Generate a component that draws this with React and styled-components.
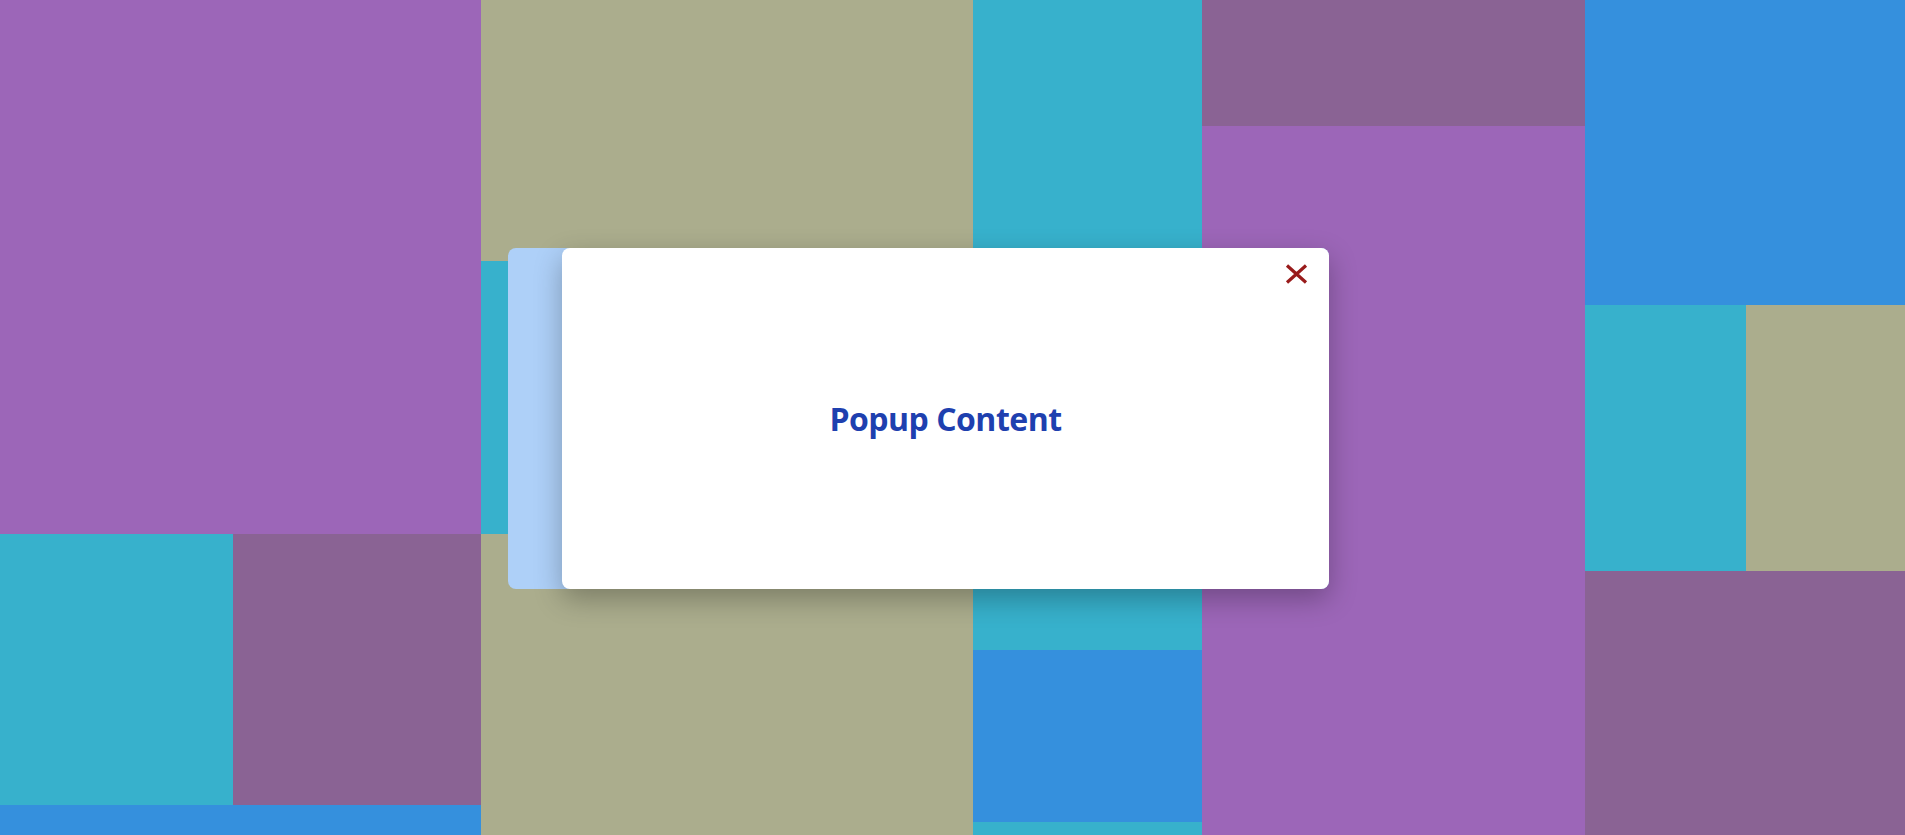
import React from "react";
import styled, { createGlobalStyle } from "styled-components";

const Global = createGlobalStyle`
  html, body { margin: 0; padding: 0; height: 100%; overflow: hidden; }
  body { font-family: "Open Sans", "Noto Sans", sans-serif; }
  #root { height: 100%; }
`;

const C = {
  purple: "#9c66b8",
  plum: "#8a6394",
  cyan: "#37b1cc",
  blue: "#3590dd",
  khaki: "#abad8d",
};

const Page = styled.div`
  position: relative;
  width: 1905px;
  height: 835px;
  overflow: hidden;
`;

const Mosaic = styled.div`
  display: flex;
  width: 100%;
  height: 100%;
`;

const Column = styled.div`
  display: flex;
  flex-direction: column;
  width: ${(p) => p.$w}px;
  flex-shrink: 0;
  height: 100%;
`;

const Row = styled.div`
  display: flex;
  height: ${(p) => p.$h}px;
  flex-shrink: 0;
`;

const Tile = styled.div`
  background: ${(p) => p.$c};
  flex: ${(p) => (p.$h || p.$w ? "none" : "1")};
  ${(p) => (p.$h ? `height: ${p.$h}px;` : "")}
  ${(p) => (p.$w ? `width: ${p.$w}px;` : "")}
`;

const Overlay = styled.div`
  position: absolute;
  left: 508px;
  top: 248px;
  width: 821px;
  height: 341px;
  display: flex;
`;

const BackCard = styled.div`
  position: absolute;
  inset: 0;
  background: #aed0f8;
  border-radius: 8px;
`;

const Card = styled.div`
  position: relative;
  margin-left: 54px;
  flex: 1;
  background: #ffffff;
  border-radius: 8px;
  box-shadow: 0 10px 28px rgba(0, 0, 0, 0.28);
  display: flex;
  align-items: center;
  justify-content: center;
`;

const Title = styled.h2`
  margin: 0;
  font-family: "Open Sans", "Noto Sans", sans-serif;
  font-weight: 700;
  font-size: 32px;
  letter-spacing: -0.5px;
  color: #1e40af;
`;

const Close = styled.button`
  position: absolute;
  top: 16px;
  right: 21px;
  width: 23px;
  height: 20px;
  padding: 0;
  border: 0;
  background: transparent;
  cursor: pointer;
  display: flex;
`;

export default function App() {
  return (
    <Page>
      <Global />
      <Mosaic>
        <Column $w={481}>
          <Tile $c={C.purple} $h={534} />
          <Row $h={271}>
            <Tile $c={C.cyan} $w={233} />
            <Tile $c={C.plum} />
          </Row>
          <Tile $c={C.blue} />
        </Column>
        <Column $w={492}>
          <Tile $c={C.khaki} $h={261} />
          <Tile $c={C.cyan} $h={273} />
          <Tile $c={C.khaki} />
        </Column>
        <Column $w={229}>
          <Tile $c={C.cyan} $h={650} />
          <Tile $c={C.blue} $h={172} />
          <Tile $c={C.cyan} />
        </Column>
        <Column $w={383}>
          <Tile $c={C.plum} $h={126} />
          <Tile $c={C.purple} />
        </Column>
        <Column $w={320}>
          <Tile $c={C.blue} $h={305} />
          <Row $h={266}>
            <Tile $c={C.cyan} $w={161} />
            <Tile $c={C.khaki} />
          </Row>
          <Tile $c={C.plum} />
        </Column>
      </Mosaic>
      <Overlay>
        <BackCard />
        <Card>
          <Title>Popup Content</Title>
          <Close aria-label="Close">
            <svg width="23" height="20" viewBox="0 0 23 20">
              <path d="M2 1.5 L21 18.5 M21 1.5 L2 18.5" stroke="#991b1b" strokeWidth="3.2" fill="none" />
            </svg>
          </Close>
        </Card>
      </Overlay>
    </Page>
  );
}
